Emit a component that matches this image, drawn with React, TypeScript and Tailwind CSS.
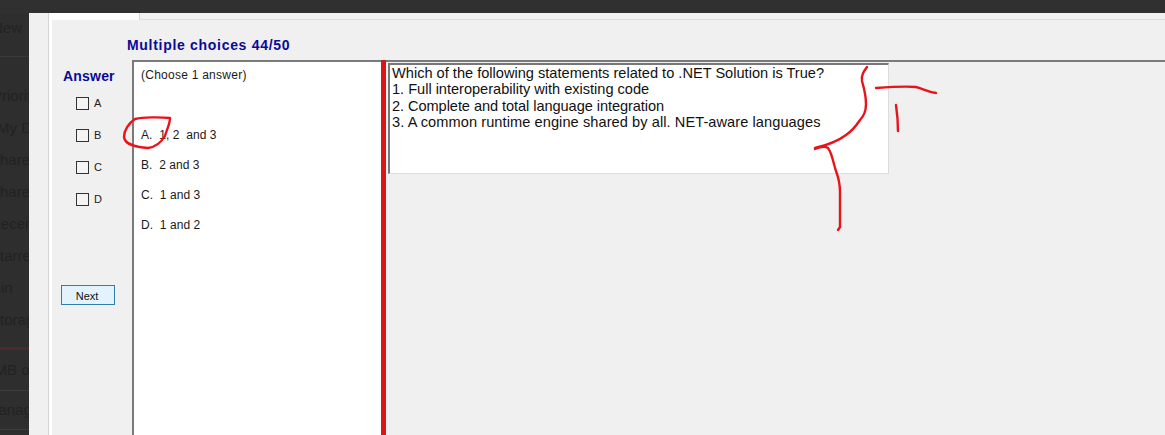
function Side({ text, className }: { text: string; className: string }) {
  return <div className={"whitespace-nowrap text-[15px] leading-[20px] text-[#222] " + className}>{text}</div>;
}

function Check({ label }: { label: string }) {
  return (
    <div className="flex items-center h-[14px] gap-[5px] text-[11px] leading-[14px] text-[#222]">
      <span className="w-[13px] h-[13px] border border-[#333] bg-[#f4f4f4]" />
      <span>{label}</span>
    </div>
  );
}

function Option({ text }: { text: string }) {
  return <div className="h-[30px] text-[12px] leading-[14px] text-[#1a1a1a] whitespace-pre tracking-[0.05px]">{text}</div>;
}

export default function App() {
  return (
    <div className="relative w-[1165px] h-[435px] overflow-hidden flex flex-col bg-[#2f2f2f] font-['Liberation_Sans',Arial,sans-serif]">
      <div className="h-[13px] shrink-0 bg-[#303030]" />
      <div className="flex-1 flex min-h-0">
        <aside className="w-[29px] shrink-0 overflow-hidden bg-[#2e2e2e] flex flex-col">
          <Side text="New" className="-ml-[8px] mt-[5px] mb-[18px]" />
          <div className="h-px bg-[#3a3a3a] mb-[29px] shrink-0" />
          <Side text="Priority" className="-ml-[8px] mb-[12px]" />
          <Side text="My Drive" className="-ml-[3px] mb-[12px]" />
          <Side text="Shared" className="-ml-[10px] mb-[12px]" />
          <Side text="Shared" className="-ml-[10px] mb-[12px]" />
          <Side text="Recent" className="-ml-[10px] mb-[12px]" />
          <Side text="Starred" className="-ml-[10px] mb-[12px]" />
          <Side text="Bin" className="-ml-[9px] mb-[12px]" />
          <Side text="Storage" className="-ml-[10px]" />
          <div className="h-[3px] bg-[#4a2a2a] mt-[17px] mb-[10px] shrink-0" />
          <Side text="5 MB of" className="-ml-[18px] mb-[10px]" />
          <div className="h-px bg-[#3d3d3d] mb-[9px] shrink-0" />
          <Side text="Manage" className="-ml-[14px] text-[#3a2626] mb-[9px]" />
          <div className="h-px bg-[#3d3d3d] shrink-0" />
        </aside>

        <div className="flex-1 min-w-0 flex bg-[#f0f0f0]">
          <div className="w-[19px] shrink-0" />
          <div className="w-[1px] shrink-0 bg-[#d4d4d4]" />
          <div className="w-[3px] shrink-0 bg-white" />
          <main className="flex-1 min-w-0 flex flex-col">
            <div className="h-[7px] shrink-0 flex">
              <div className="w-[88px] bg-white border-r border-[#d8d8d8]" />
              <div className="flex-1 border-b border-[#dcdcdc]" />
            </div>
            <div className="h-[40px] shrink-0 pl-[75px] pt-[17px] text-[14px] leading-[16px] font-bold text-[#0a0a96] tracking-[0.7px]">
              Multiple choices 44/50
            </div>
            <div className="flex-1 flex min-h-0">
              <div className="w-[80px] shrink-0 flex flex-col">
                <div className="pl-[11px] pt-[8px] text-[14px] leading-[16px] font-bold text-[#0a0a96] tracking-[0.2px]">Answer</div>
                <div className="pl-[24px] pt-[12px] flex flex-col gap-[18px]">
                  <Check label="A" />
                  <Check label="B" />
                  <Check label="C" />
                  <Check label="D" />
                </div>
                <button className="ml-[9px] mt-[79px] w-[54px] h-[20px] border border-[#2f7fa8] bg-[#e3f3fd] text-[11px] leading-[18px] text-[#111] pr-[2px] pt-px">
                  Next
                </button>
              </div>
              <div className="w-[249px] shrink-0 bg-white border-l-2 border-t-2 border-[#7a7a7a] pl-[7px] pt-[6px]">
                <div className="h-[60px] text-[12px] leading-[14px] text-[#1a1a1a] tracking-[0.25px]">(Choose 1 answer)</div>
                <Option text="A.  1, 2  and 3" />
                <Option text="B.  2 and 3" />
                <Option text="C.  1 and 3" />
                <Option text="D.  1 and 2" />
              </div>
              <div className="w-[5px] shrink-0 bg-[#d81818]" />
              <div className="flex-1 min-w-0 pl-[2px] border-t-2 border-[#7a7a7a]">
                <div className="w-[501px] h-[111px] mt-[1px] bg-white border-t-2 border-l-2 border-[#777] border-b border-r border-b-[#dcdcdc] border-r-[#dcdcdc] pl-[2px] text-[14.6px] leading-[16.33px] text-[#111]">
                  <div>Which of the following statements related to .NET Solution is True?</div>
                  <div className="tracking-[-0.02px]">1. Full interoperability with existing code</div>
                  <div className="tracking-[-0.07px]">2. Complete and total language integration</div>
                  <div className="tracking-[0.07px]">3. A common runtime engine shared by all. NET-aware languages</div>
                </div>
              </div>
            </div>
          </main>
        </div>
      </div>

      <svg className="absolute left-0 top-0 pointer-events-none" width="1165" height="435" fill="none" stroke="#e8141c" strokeWidth="2.4" strokeLinecap="round" strokeLinejoin="round">
        <path d="M170 118 C160 117 143 117 135 119 C129 123 124 130 124 137 C125 145 136 147 148 148 C156 147 162 141 165 136 C167 129 170 124 170 118" />
        <path d="M867 67 C864 71 861 75 862 81 C864 88 866 95 866 104 C866 112 864 116 860 120 C856 126 852 131 846 135 C838 141 828 145 815 148" />
        <path d="M815 149 C820 147 825 146 828 148 C832 153 833 162 836 171 C839 179 840 184 840 192 L840 227 L838 230" />
        <path d="M876 88 C890 87 905 86 916 87 C924 89 928 92 936 93" />
        <path d="M896 105 C897 112 898 122 898 131" />
      </svg>
    </div>
  );
}
